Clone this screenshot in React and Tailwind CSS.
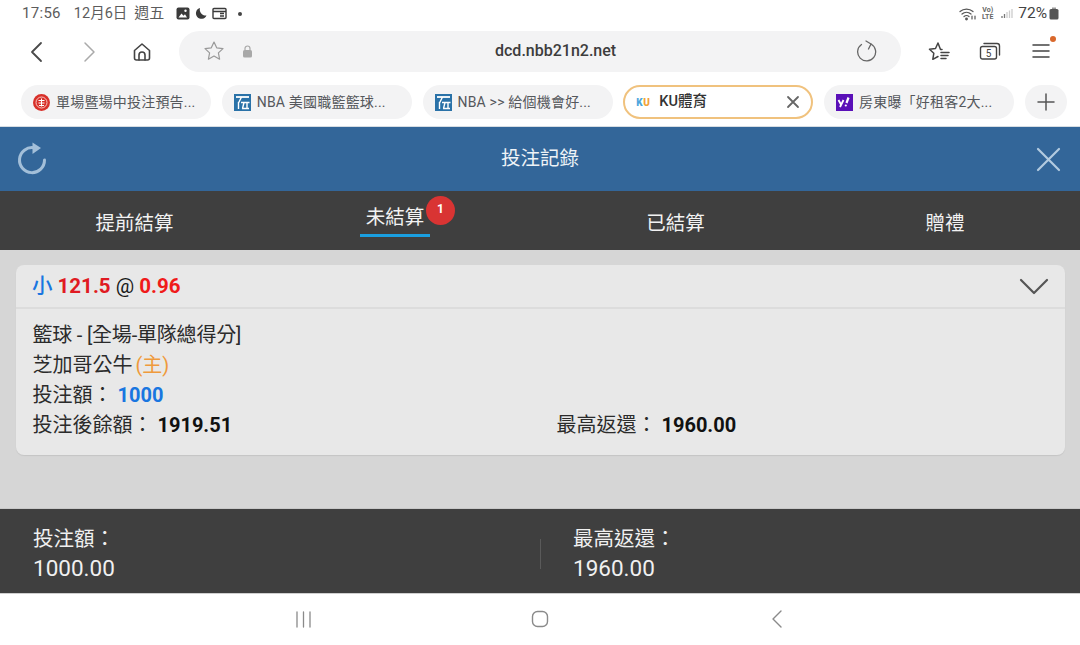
const FONT = "font-['Roboto','Noto_Sans_CJK_TC',sans-serif]";

function WanIcon() {
  return (
    <svg width="17" height="17" viewBox="0 0 17 17" className="shrink-0">
      <rect width="17" height="17" fill="#2a72a8" />
      <path d="M2 3h13" stroke="#fff" strokeWidth="1.800" fill="none" />
      <path d="M7.500 3 4.500 9M4.500 8v7M7 8.500h8.500M8 14.500h7M10 8.500 8.500 14.500M13 8.500v6" stroke="#fff" strokeWidth="1.400" fill="none" />
    </svg>
  );
}

function Chip({ icon, text }) {
  return (
    <div className="w-[190px] h-[34px] shrink-0 rounded-full bg-[#f3f3f4] flex items-center pl-[12px] gap-[6px]">
      {icon}
      <span className="text-[14px] text-[#55585c] whitespace-nowrap tracking-[0.2px]">{text}</span>
    </div>
  );
}

function StatusIcons() {
  return (
    <div className="flex items-center gap-[4px]">
      <svg width="14" height="13" viewBox="0 0 14 13"><rect x="0.500" y="0.500" width="13" height="12" rx="2" fill="#3a3a3a" /><path d="M2.500 10.500l3-4 2 2.200 1.500-1.500 2 3.300z" fill="#fff" /><circle cx="9.500" cy="3.800" r="1.200" fill="#fff" /></svg>
      <svg width="13" height="13" viewBox="0 0 13 13"><path d="M6 1a5.500 5.500 0 1 0 6.500 7.500A6 6 0 0 1 6 1z" fill="#3a3a3a" /></svg>
      <svg width="15" height="13" viewBox="0 0 15 13" className="ml-[1px]"><rect x="1" y="1.500" width="13" height="10" rx="1" fill="none" stroke="#3a3a3a" strokeWidth="1.400" /><path d="M1 4.500h13M8 6.500h4M8 9h4" stroke="#3a3a3a" strokeWidth="1.300" /></svg>
      <span className="w-[4px] h-[4px] rounded-full bg-[#444] ml-[7px]" />
    </div>
  );
}

function Stroke({ w, h, children, sw = 1.8, color = "#555", className = "" }) {
  return (
    <svg width={w} height={h} viewBox={`0 0 ${w} ${h}`} fill="none" stroke={color} strokeWidth={sw} strokeLinecap="round" strokeLinejoin="round" className={className}>
      {children}
    </svg>
  );
}

export default function App() {
  return (
    <div className={`w-[1080px] h-[645px] bg-white flex flex-col overflow-hidden ${FONT}`}>
      {/* status bar */}
      <div className="h-[30px] shrink-0 flex items-start justify-between pl-[22px] pr-[21px] pt-[4px]">
        <div className="flex items-center h-[19px] text-[15px] text-[#5c5c5c]">
          <span className="tracking-[0.3px]">17:56</span>
          <span className="ml-[13px] text-[14.500px]">12月6日</span>
          <span className="ml-[7px] mr-[12px]">週五</span>
          <StatusIcons />
        </div>
        <div className="flex items-center h-[19px] gap-[4px]">
          <svg width="18" height="14" viewBox="0 0 18 14" fill="none" stroke="#555" strokeWidth="1.200" strokeLinecap="round"><path d="M1 4.500a10 10 0 0 1 13 0M3 7a7 7 0 0 1 9 0M5 9.500a4 4 0 0 1 5 0" /><circle cx="7.500" cy="12" r="0.800" fill="#555" /><path d="M13 12V9M16 9v3" /></svg>
          <span className="text-[7px] leading-[7px] font-bold text-[#666] text-center w-[13px]">Vo)<br />LTE</span>
          <svg width="12" height="11" viewBox="0 0 12 11" className="ml-[3px]"><path d="M1 10V8M3.500 10V6" stroke="#777" strokeWidth="1.300" /><path d="M6 10V4M8.500 10V2.500M11 10V1" stroke="#ccc" strokeWidth="1.300" /></svg>
          <span className="text-[15.500px] text-[#444] ml-[1px]">72%</span>
          <svg width="10" height="13" viewBox="0 0 10 13" className="-ml-[2px]"><rect x="3" y="0.500" width="4" height="2" fill="#999" /><rect x="0.500" y="2" width="9" height="10.500" rx="1.500" fill="#555" /></svg>
        </div>
      </div>

      {/* toolbar */}
      <div className="h-[42px] shrink-0 flex items-center">
        <Stroke w={14} h={22} sw={1.800} color="#4a4a4a" className="ml-[29px] mt-[1px]"><path d="M12 2 3 11l9 9" /></Stroke>
        <Stroke w={14} h={22} sw={1.500} color="#aaa" className="ml-[40px] mt-[1px]"><path d="M2 2l9 9-9 9" /></Stroke>
        <Stroke w={20} h={20} sw={1.600} color="#444" className="ml-[35px] mt-[1px]"><path d="M2.500 8.500 10 2l7.500 6.500V16a2 2 0 0 1-2 2h-11a2 2 0 0 1-2-2z" /><path d="M7 18v-5a3 3 0 0 1 6 0v5" /></Stroke>
        <div className="ml-[27px] w-[722px] h-[41px] rounded-full bg-[#f3f3f4] flex items-center relative">
          <Stroke w={22} h={22} sw={1.200} color="#999" className="ml-[24px]"><path d="m11 2 2.700 5.800 6.300.8-4.600 4.300 1.200 6.300L11 16l-5.600 3.200 1.200-6.300L2 8.600l6.300-.8z" /></Stroke>
          <svg width="11" height="13" viewBox="0 0 11 13" className="ml-[17px]"><rect x="1" y="5" width="9" height="7.500" rx="1.500" fill="#a8a8a8" /><path d="M3 5V3.500a2.500 2.500 0 0 1 5 0V5" fill="none" stroke="#a8a8a8" strokeWidth="1.200" /></svg>
          <span className="absolute left-[316px] text-[16px] font-medium text-[#3c3c3c]">dcd.nbb21n2.net</span>
          <Stroke w={22} h={22} sw={1.300} color="#666" className="ml-auto mr-[24px]"><path d="M6.500 4.500a9 9 0 1 0 9.500-.5" /><path d="M11 1l5 3-2.500 5" /></Stroke>
        </div>
        <Stroke w={24} h={22} sw={1.500} color="#444" className="ml-[26px]"><path d="M15 9.500h-1.500L11 3 8.500 8.500l-6 .8 4.300 4-1 6L11 16.500M14 12.500h8M14 15.500h7M14 18.500h5" /></Stroke>
        <Stroke w={22} h={20} sw={1.400} color="#444" className="ml-[28px]"><rect x="1.500" y="5.500" width="16" height="12.500" rx="2" /><path d="M5 2.500h13a2.500 2.500 0 0 1 2.500 2.500v9" /><text x="9.500" y="15.500" fontSize="10" fill="#444" stroke="none" textAnchor="middle" fontFamily="Roboto">5</text></Stroke>
        <div className="relative ml-[31px]">
          <Stroke w={18} h={16} sw={1.500} color="#444"><path d="M1 2h16M1 8h16M1 14h16" /></Stroke>
          <span className="absolute -top-[7px] right-[-6px] w-[6px] h-[6px] rounded-full bg-[#d9682c]" />
        </div>
      </div>

      {/* tab strip */}
      <div className="h-[55px] shrink-0 flex items-start pt-[13px] pl-[21px] gap-[10.750px] border-b border-[#d6dde3]">
        <Chip
          text="單場暨場中投注預告..."
          icon={
            <svg width="17" height="17" viewBox="0 0 17 17" className="shrink-0"><circle cx="8.500" cy="8.500" r="8.500" fill="#d8302a" /><circle cx="8.500" cy="8.500" r="5.500" fill="none" stroke="#f6c9c4" strokeWidth="1" /><path d="M5.500 6.500h6M5.500 9h6M8.500 4.500v8M6 11.500h5" stroke="#fff" strokeWidth="1" /></svg>
          }
        />
        <Chip icon={<WanIcon />} text="NBA 美國職籃籃球..." />
        <Chip icon={<WanIcon />} text="NBA >> 給個機會好..." />
        <div className="w-[190px] h-[34px] shrink-0 rounded-full bg-white border-2 border-[#f0c27e] flex items-center pl-[11px] pr-[11px]">
          <span className="text-[10px] font-black w-[18px] shrink-0 tracking-[0.5px]">
            <span className="text-[#4ea6dd]">K</span>
            <span className="text-[#f2a33a]">U</span>
          </span>
          <span className="text-[14.500px] font-medium text-[#333] ml-[5px]">KU體育</span>
          <Stroke w={14} h={14} sw={1.800} color="#666" className="ml-auto"><path d="M2 2l10 10M12 2 2 12" /></Stroke>
        </div>
        <Chip
          text="房東曝「好租客2大..."
          icon={
            <svg width="17" height="17" viewBox="0 0 17 17" className="shrink-0"><rect width="17" height="17" fill="#5a10b8" /><path d="M2.500 6l2.500 4.500M7.500 6 4 13" stroke="#fff" strokeWidth="1.800" /><path d="M12.500 3.500 10.500 9" stroke="#fff" strokeWidth="2.200" /><circle cx="9.800" cy="11.500" r="1.100" fill="#fff" /></svg>
          }
        />
        <div className="w-[42px] h-[34px] shrink-0 rounded-full bg-[#f3f3f4] flex items-center justify-center">
          <Stroke w={18} h={18} sw={1.500} color="#555"><path d="M9 1v16M1 9h16" /></Stroke>
        </div>
      </div>

      {/* blue header */}
      <div className="h-[64px] shrink-0 bg-[#336699] flex items-center justify-between pl-[17px] pr-[19px] relative">
        <svg width="30" height="34" viewBox="0 0 30 34" fill="none">
          <path d="M17 5.800A12.500 12.500 0 1 0 27.500 18" stroke="#a3bfd9" strokeWidth="3" strokeLinecap="round" />
          <path d="M15.500 0.500 24 6l-8.500 6z" fill="#a3bfd9" />
        </svg>
        <span className="absolute left-0 right-0 text-center text-[19.500px] text-[#eef3f7]">投注記錄</span>
        <Stroke w={25} h={25} sw={2.200} color="#b3cbe0"><path d="M2 2l21 21M23 2 2 23" /></Stroke>
      </div>

      {/* tabs */}
      <div className="h-[59px] shrink-0 bg-[#3f3f3f] grid grid-cols-4 text-[19.500px] text-[#f2f2f2]">
        <div className="flex items-center justify-center pt-[6px]"><span className="mr-[1px]">提前結算</span></div>
        <div className="flex justify-center">
          <div className="relative h-[46px] w-[70px] border-b-[3px] border-[#1a9fe0] flex justify-center items-center pt-[11px] ml-[-20px]">
            <span>未結算</span>
            <span className="absolute left-[66px] top-[5px] w-[29px] h-[29px] rounded-full bg-[#d93433] text-white text-[12px] font-bold flex items-center justify-center pb-[4px]">1</span>
          </div>
        </div>
        <div className="flex items-center justify-center pt-[6px] ml-[1px]"><span>已結算</span></div>
        <div className="flex items-center justify-center pt-[6px]"><span>贈禮</span></div>
      </div>

      {/* content */}
      <div className="h-[258px] shrink-0 bg-[#d6d6d6] pt-[15px] pl-[16px] pr-[15px]">
        <div className="h-[190px] rounded-[8px] bg-[#e8e8e8] flex flex-col shadow-[0_1px_1px_rgba(0,0,0,0.08)]">
          <div className="h-[44px] shrink-0 border-b-2 border-[#dcdcdc] flex items-center justify-between pl-[16px] pr-[16px] text-[20.500px] font-bold">
            <div className="whitespace-nowrap">
              <span className="text-[#1976e0] font-medium">小</span>
              <span className="text-[#e01a22]"> 121.5</span>
              <span className="text-[#1a1a1a] font-normal"> @ </span>
              <span className="text-[#f01a1a]">0.96</span>
            </div>
            <Stroke w={30} h={18} sw={2.200} color="#555"><path d="M2 3l13 13L28 3" /></Stroke>
          </div>
          <div className="pl-[16.500px] pt-[11px] text-[20px] leading-[30px] text-[#2b2b2b]">
            <div className="tracking-[-0.2px]">籃球 - [全場-單隊總得分]</div>
            <div>芝加哥公牛<span className="text-[#ef9a3c] ml-[3px]">(主)</span></div>
            <div>投注額： <span className="font-bold text-[#1976e0]">1000</span></div>
            <div className="flex">
              <div className="w-[524px]">投注後餘額： <span className="font-bold text-[#111]">1919.51</span></div>
              <div>最高返還： <span className="font-bold text-[#111]">1960.00</span></div>
            </div>
          </div>
        </div>
      </div>

      {/* totals */}
      <div className="h-[85px] shrink-0 bg-[#3f3f3f] flex items-center pt-[5px] border-t border-[#c8c8c8] text-[20.500px] leading-[29px] text-[#f0f0f0]">
        <div className="w-[540px] pl-[33px]">
          <div>投注額：</div>
          <div className="text-[22.500px]">1000.00</div>
        </div>
        <div className="w-px h-[30px] bg-[#5a5a5a]" />
        <div className="pl-[32px]">
          <div>最高返還：</div>
          <div className="text-[22.500px]">1960.00</div>
        </div>
      </div>

      {/* nav */}
      <div className="flex-1 bg-white border-t border-[#cfcfcf] flex items-start pt-[16px]">
        <Stroke w={18} h={18} sw={1.300} color="#8a8a8a" className="ml-[295px]"><path d="M2 2v15M8.500 2v15M15 2v15" /></Stroke>
        <Stroke w={18} h={18} sw={1.400} color="#8a8a8a" className="ml-[218px]"><rect x="1.500" y="1.500" width="15" height="15" rx="5" /></Stroke>
        <Stroke w={12} h={18} sw={1.400} color="#8a8a8a" className="ml-[222px]"><path d="M10 1 2 9l8 8" /></Stroke>
      </div>
    </div>
  );
}
